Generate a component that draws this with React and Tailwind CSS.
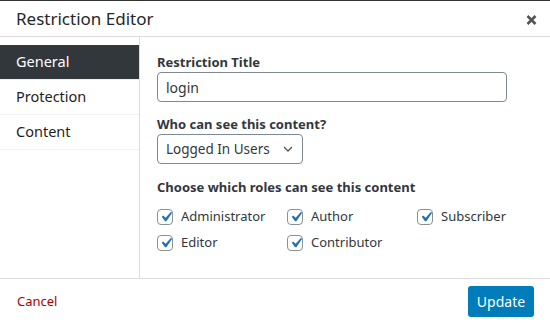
import React, { useState } from "react";

const tabs = ["General", "Protection", "Content"];

const roles = [
  ["Administrator", "Author", "Subscriber"],
  ["Editor", "Contributor"],
];

const Check = () => (
  <span className="relative w-4 h-4 rounded-[4px] border border-[#8c8f94] bg-white shrink-0">
    <svg viewBox="0 0 20 20" className="absolute w-[20px] h-[20px] -top-[3px] -left-[2px]">
      <path d="M14.83 4.89l1.34.94-5.81 8.38H9.02L5.78 9.67l1.34-1.25 2.57 2.4z" fill="#2271b1" />
    </svg>
  </span>
);

const RestrictionEditor = () => {
  const [active, setActive] = useState("General");
  const [title, setTitle] = useState("login");

  return (
    <div
      className="w-[550px] h-[324px] bg-white border-t border-[#333] flex flex-col text-[#32373c] overflow-hidden"
      style={{ fontFamily: '"Noto Sans", "Open Sans", sans-serif' }}
    >
      {/* header */}
      <div className="h-[36px] border-b border-[#dcdcde] flex items-center justify-between pl-4 pr-[13px] shrink-0">
        <h1 className="text-[17px] text-[#23282d] leading-none">Restriction Editor</h1>
        <button className="w-[11px] h-[10px] mt-[2px]">
          <svg viewBox="0 0 11 10" className="w-[11px] h-[10px]">
            <path d="M1.5 1l8 8M9.5 1l-8 8" stroke="#555" strokeWidth="2.6" />
          </svg>
        </button>
      </div>

      {/* body */}
      <div className="flex flex-1 min-h-0">
        <div className="w-[140px] border-r border-[#dcdcde] pt-2 shrink-0">
          {tabs.map((tab) => (
            <button
              key={tab}
              onClick={() => setActive(tab)}
              className={
                "w-full h-[35px] text-left pl-4 text-[14.5px] border-b border-[#f0f0f0] " +
                (active === tab ? "bg-[#32373c] text-white" : "text-[#1e1e1e]")
              }
            >
              {tab}
            </button>
          ))}
        </div>

        <div className="flex-1 pl-[17px] pt-[16px] text-[13px]">
          <label className="block font-bold text-[#32373c] leading-[18px]">Restriction Title</label>
          <input
            value={title}
            onChange={(e) => setTitle(e.target.value)}
            className="mt-[1px] w-[350px] h-[30px] border border-[#7e8993] rounded-[4px] px-2 text-[14px] text-[#32373c] outline-none"
          />

          <label className="block font-bold mt-[13px] leading-[18px]">Who can see this content?</label>
          <div className="mt-[1px] w-[146px] h-[30px] border border-[#7e8993] rounded-[4px] pl-2 pr-[6px] flex items-center justify-between">
            <span className="text-[13.5px]">Logged In Users</span>
            <svg viewBox="0 0 20 20" className="w-4 h-4">
              <path d="M5 7.5l5 5 5-5" fill="none" stroke="#555" strokeWidth="1.6" />
            </svg>
          </div>

          <div className="font-bold mt-[14px] leading-[18px]">Choose which roles can see this content</div>

          <div className="mt-[13px] flex flex-col gap-[10px]">
            {roles.map((row, i) => (
              <div key={i} className="flex">
                {row.map((role) => (
                  <label key={role} className="w-[130px] flex items-center gap-2 h-[16px]">
                    <Check />
                    <span className="text-[13px] text-[#32373c]">{role}</span>
                  </label>
                ))}
              </div>
            ))}
          </div>
        </div>
      </div>

      {/* footer */}
      <div className="h-[46px] border-t border-[#dcdcde] flex items-center justify-between pl-[17px] pr-4 shrink-0">
        <a className="text-[#a00] text-[13px]">Cancel</a>
        <button className="bg-[#007cba] text-white text-[14px] rounded-[3px] w-[66px] h-[31px]">Update</button>
      </div>
    </div>
  );
};

export default function App() {
  return <RestrictionEditor />;
}
